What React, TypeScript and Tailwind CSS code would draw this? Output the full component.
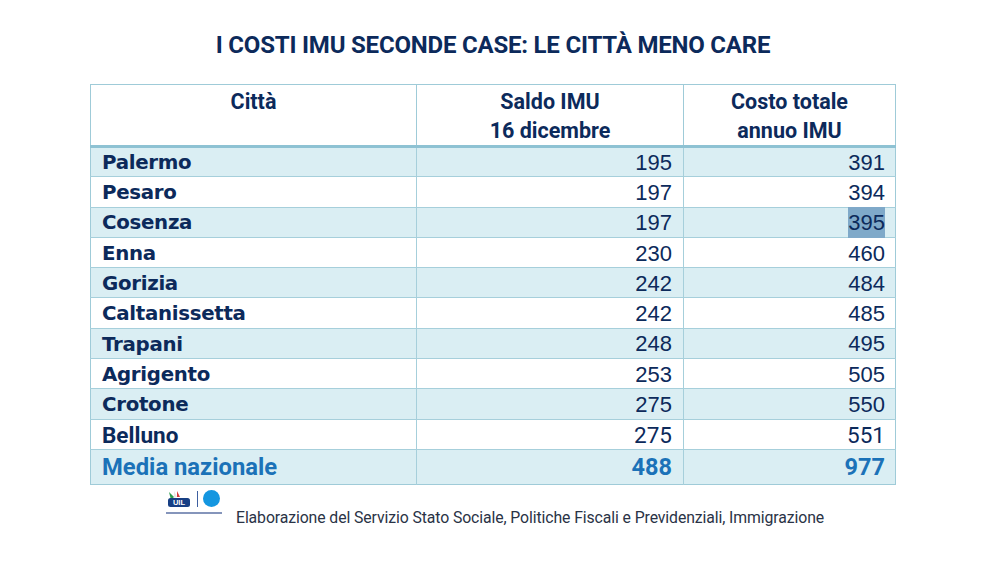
const rows: [string, number, number][] = [
  ["Palermo", 195, 391],
  ["Pesaro", 197, 394],
  ["Cosenza", 197, 395],
  ["Enna", 230, 460],
  ["Gorizia", 242, 484],
  ["Caltanissetta", 242, 485],
  ["Trapani", 248, 495],
  ["Agrigento", 253, 505],
  ["Crotone", 275, 550],
  ["Belluno", 275, 551],
];

function Logo() {
  return (
    <div className="flex flex-col items-start">
      <div className="flex items-center gap-[5px]">
        <svg width="26" height="18" viewBox="0 0 26 18">
          <path d="M3 2 L8 7 L5 10 Z" fill="#2e9e4f" />
          <path d="M8 1 L11 7 L8 8 Z" fill="#e8e8e8" />
          <path d="M11 1 L14 7 L11 7 Z" fill="#d63b3b" />
          <rect x="2" y="8" width="22" height="9" rx="2.5" fill="#173f84" />
          <text x="13" y="15" textAnchor="middle" fontSize="7.5" fontWeight="700" fill="#fff" fontFamily="Arial, sans-serif">UIL</text>
        </svg>
        <div className="w-px h-[16px] bg-[#3d5fa0]" />
        <div className="w-[17px] h-[17px] rounded-full bg-[#1496e0]" />
      </div>
      <div className="mt-[4px] h-[2px] w-[56px] bg-[#8595bb]" />
    </div>
  );
}

export default function App() {
  return (
    <div className="w-[1001px] h-[568px] bg-white pl-[90px] pt-[31px] font-['Liberation_Sans',sans-serif] text-[#0c2a5b]">
      <div className="w-[806px] flex flex-col">
        <h1 className="text-center font-['Roboto',sans-serif] font-bold text-[24px] leading-[28px] tracking-[-0.2px] text-[#0c2a5b]">
          I COSTI IMU SECONDE CASE: LE CITTÀ MENO CARE
        </h1>
        <table className="mt-[25px] w-[806px] border-collapse border border-[#9fcbd8]">
          <thead>
            <tr className="h-[62px] border-b-[3px] border-[#8ec2d3]">
              <th className="w-[326px] align-top pt-[2px] font-['Roboto',sans-serif] font-bold text-[21.5px] leading-[29px] border-r border-[#9fcbd8]">
                Città
              </th>
              <th className="w-[267px] align-top pt-[2px] font-['Roboto',sans-serif] font-bold text-[21.5px] leading-[29px] border-r border-[#9fcbd8]">
                Saldo IMU
                <br />
                16 dicembre
              </th>
              <th className="align-top pt-[2px] font-['Roboto',sans-serif] font-bold text-[21.5px] leading-[29px]">
                Costo totale
                <br />
                annuo IMU
              </th>
            </tr>
          </thead>
          <tbody>
            {rows.map(([city, a, b], i) => {
              const cond = city === "Belluno";
              return (
                <tr
                  key={city}
                  className={`h-[30.3px] border-b border-[#a6cfdb] ${i % 2 === 0 ? "bg-[#daeef3]" : "bg-white"}`}
                >
                  <td
                    className={`pl-[11px] pt-[2px] leading-none border-r border-[#a6cfdb] font-bold ${
                      cond ? "font-['Roboto',sans-serif] text-[22.5px]" : "font-['DejaVu_Sans',sans-serif] text-[19.8px] tracking-[-0.3px]"
                    }`}
                  >
                    {city}
                  </td>
                  <td
                    className={`pr-[11px] pt-[2px] text-right leading-none border-r border-[#a6cfdb] ${
                      cond ? "font-['Roboto',sans-serif] text-[22.5px]" : "text-[22px]"
                    }`}
                  >
                    {a}
                  </td>
                  <td
                    className={`pr-[10px] pt-[2px] text-right leading-none ${
                      cond ? "font-['Roboto',sans-serif] text-[22.5px]" : "text-[22px]"
                    }`}
                  >
                    {i === 2 ? <span className="bg-[#7fa9c9] py-[3px]">{b}</span> : b}
                  </td>
                </tr>
              );
            })}
            <tr className="h-[35px] bg-[#daeef3] text-[#1b72b8]">
              <td className="pl-[11px] pt-[1px] font-['Roboto',sans-serif] font-bold text-[23.8px] leading-none border-r border-[#a6cfdb]">
                Media nazionale
              </td>
              <td className="pr-[11px] pt-[1px] text-right font-['Roboto',sans-serif] font-bold text-[23.5px] leading-none border-r border-[#a6cfdb]">
                488
              </td>
              <td className="pr-[10px] pt-[1px] text-right font-['Roboto',sans-serif] font-bold text-[23.5px] leading-none">977</td>
            </tr>
          </tbody>
        </table>
        <div className="flex pl-[76px] pt-[5px]">
          <Logo />
          <p className="ml-[14px] mt-[18px] font-['Roboto',sans-serif] text-[15.8px] leading-[20px] text-[#2a3346] tracking-[-0.1px]">
            Elaborazione del Servizio Stato Sociale, Politiche Fiscali e Previdenziali, Immigrazione
          </p>
        </div>
      </div>
    </div>
  );
}
